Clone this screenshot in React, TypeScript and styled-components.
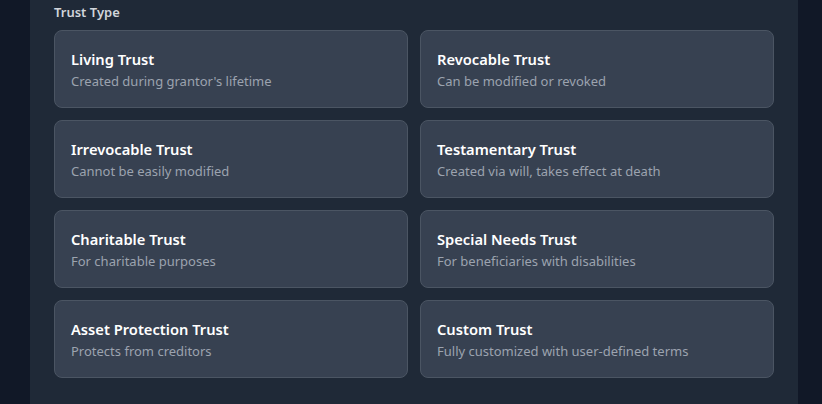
import React from "react";
import styled, { createGlobalStyle } from "styled-components";

const Global = createGlobalStyle`
  html, body { margin: 0; padding: 0; background: #111827; }
  body { font-family: "Noto Sans", "Open Sans", sans-serif; -webkit-font-smoothing: antialiased; }
  * { box-sizing: border-box; }
`;

const Page = styled.div`
  min-height: 404px;
  padding: 0 24px 0 30px;
  background: #111827;
  display: flex;
`;

const Panel = styled.section`
  width: 768px;
  background: #1f2937;
  padding: 2px 24px 26px;
`;

const Label = styled.div`
  font-size: 13px;
  line-height: 20px;
  font-weight: 600;
  color: #d1d5db;
  margin-bottom: 8px;
`;

const Grid = styled.div`
  display: grid;
  grid-template-columns: 1fr 1fr;
  gap: 12px;
`;

const Card = styled.button`
  text-align: left;
  font-family: inherit;
  background: #374151;
  border: 1px solid #4b5563;
  border-radius: 8px;
  padding: 16px;
  cursor: pointer;
  display: flex;
  flex-direction: column;
`;

const Title = styled.span`
  font-size: 14.7px;
  line-height: 24px;
  font-weight: 600;
  color: #ffffff;
`;

const Desc = styled.span`
  font-size: 13px;
  line-height: 20px;
  color: #9ca3af;
`;

const trusts = [
  ["Living Trust", "Created during grantor's lifetime"],
  ["Revocable Trust", "Can be modified or revoked"],
  ["Irrevocable Trust", "Cannot be easily modified"],
  ["Testamentary Trust", "Created via will, takes effect at death"],
  ["Charitable Trust", "For charitable purposes"],
  ["Special Needs Trust", "For beneficiaries with disabilities"],
  ["Asset Protection Trust", "Protects from creditors"],
  ["Custom Trust", "Fully customized with user-defined terms"],
];

export default function App() {
  return (
    <>
      <Global />
      <Page>
        <Panel>
          <Label>Trust Type</Label>
          <Grid>
            {trusts.map(([t, d]) => (
              <Card key={t}>
                <Title>{t}</Title>
                <Desc>{d}</Desc>
              </Card>
            ))}
          </Grid>
        </Panel>
      </Page>
    </>
  );
}
